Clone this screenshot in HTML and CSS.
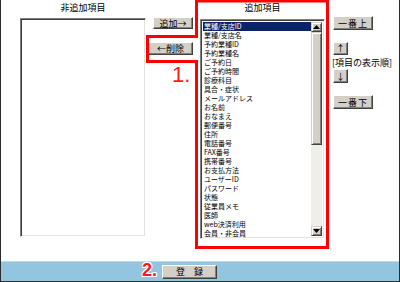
FILE: index.html
```html
<!DOCTYPE html>
<html lang="ja">
<head>
  <meta charset="UTF-8" />
  <title>表示項目の設定</title>
  <link rel="stylesheet" href="styles.css">
</head>
<body>

  <div class="page">
    <div class="main">
      <div class="col-left">
        <div class="title">非追加項目</div>
        <div class="listbox listbox-left"></div>
      </div>

      <div class="col-move">
        <button class="btn btn-add">追加→</button>
        <button class="btn btn-del">←削除</button>
        <div class="step step-1">1.</div>
      </div>

      <div class="col-right">
        <div class="title title-right">追加項目</div>
        <div class="listbox listbox-right">
          <ul class="items">
            <li class="selected">業種/支店ID</li>
            <li>業種/支店名</li>
            <li>予約業種ID</li>
            <li>予約業種名</li>
            <li>ご予約日</li>
            <li>ご予約時間</li>
            <li>診療科目</li>
            <li>具合・症状</li>
            <li>メールアドレス</li>
            <li>お名前</li>
            <li>おなまえ</li>
            <li>郵便番号</li>
            <li>住所</li>
            <li>電話番号</li>
            <li>FAX番号</li>
            <li>携帯番号</li>
            <li>お支払方法</li>
            <li>ユーザーID</li>
            <li>パスワード</li>
            <li>状態</li>
            <li>従業員メモ</li>
            <li>医師</li>
            <li>web決済利用</li>
            <li>会員・非会員</li>
          </ul>
          <div class="scrollbar">
            <div class="sb-btn">
              <svg width="7" height="4" viewBox="0 0 7 4"><path d="M3.5 0 L7 4 H0 Z" fill="#000"/></svg>
            </div>
            <div class="sb-thumb"></div>
            <div class="sb-track"></div>
            <div class="sb-btn">
              <svg width="7" height="4" viewBox="0 0 7 4"><path d="M0 0 H7 L3.5 4 Z" fill="#000"/></svg>
            </div>
          </div>
        </div>
      </div>

      <div class="col-order">
        <button class="btn btn-wide">一番上</button>
        <button class="btn btn-arrow btn-up">↑</button>
        <div class="order-label">[項目の表示順]</div>
        <button class="btn btn-arrow btn-down">↓</button>
        <button class="btn btn-wide btn-bottom">一番下</button>
      </div>

      <!-- annotation outline around the selected list -->
      <svg class="outline" width="400" height="261" viewBox="0 0 400 261">
        <path d="M196.5 1 H327.5 V247.5 H196.5 V61.5 H147.5 V36.5 H196.5 Z" fill="none" stroke="#ff0000" stroke-width="3"/>
      </svg>
    </div>

    <div class="footer">
      <span class="step step-2">2.</span>
      <button class="btn btn-submit">登　録</button>
    </div>
  </div>

</body>
</html>
```

FILE: styles.css
```css
body {
  margin: 0;
  background: #fff;
}
.page {
  position: relative;
  width: 398px;
  height: 281px;
  border: 1px solid #2b2b2b;
  border-top: 0;
  font-family: "Noto Sans CJK JP", sans-serif;
  color: #000;
  background: #fff;
}
.main {
  display: flex;
  height: 261px;
  padding-left: 19px;
}
.title {
  height: 18px;
  font-size: 9px;
  line-height: 15px;
  text-align: center;
}
.title-right {
  height: 19px;
}
.listbox {
  box-sizing: border-box;
  border: 1px solid;
  border-color: #808080 #fff #fff #808080;
  box-shadow: inset 1px 1px #404040, inset -1px -1px #e4e2dc;
  background: #fff;
}
.col-left {
  width: 126px;
}
.listbox-left {
  height: 219px;
}
.col-move {
  width: 54px;
  display: flex;
  flex-direction: column;
  align-items: flex-end;
  padding-top: 17px;
  padding-right: 7px;
  box-sizing: border-box;
}
.btn {
  box-sizing: border-box;
  margin: 0;
  padding: 0;
  font-family: "Noto Sans CJK JP", sans-serif;
  font-size: 9px;
  line-height: 1;
  color: #000;
  background: #d4d0c8;
  border: 1px solid;
  border-color: #fff #404040 #404040 #fff;
  box-shadow: inset -1px -1px #808080;
}
.btn-add {
  width: 40px;
  height: 12px;
}
.btn-del {
  width: 45px;
  height: 13px;
  margin-top: 13px;
}
.step {
  font-family: "Liberation Sans", sans-serif;
  color: #ff1a1a;
}
.step-1 {
  align-self: flex-start;
  margin: 9px 0 0 26px;
  font-size: 22px;
  line-height: 22px;
}
.col-right {
  width: 125px;
}
.listbox-right {
  display: flex;
  height: 220px;
  padding: 2px;
}
.items {
  list-style: none;
  margin: 0;
  padding: 0;
  width: 110px;
  font-size: 7px;
  line-height: 9px;
  white-space: nowrap;
}
.items li {
  height: 9px;
  padding-left: 1px;
}
.items .selected {
  background: #0a246a;
  color: #fff;
}
.scrollbar {
  width: 11px;
  display: flex;
  flex-direction: column;
}
.sb-btn, .sb-thumb {
  box-sizing: border-box;
  background: #d4d0c8;
  border: 1px solid;
  border-color: #d4d0c8 #404040 #404040 #d4d0c8;
  box-shadow: inset 1px 1px #fff, inset -1px -1px #808080;
}
.sb-btn {
  height: 10px;
  display: flex;
  align-items: center;
  justify-content: center;
}
.sb-thumb {
  height: 113px;
}
.sb-track {
  flex: 1;
  background: #efeee9;
}
.col-order {
  display: flex;
  flex-direction: column;
  align-items: flex-start;
  margin-left: 8px;
  padding-top: 16px;
}
.btn-wide {
  width: 40px;
  height: 14px;
  letter-spacing: 1px;
}
.btn-arrow {
  width: 15px;
  height: 13px;
}
.btn-up {
  margin-top: 12px;
}
.order-label {
  font-size: 9px;
  line-height: 11px;
  margin: 2px 0 1px -1px;
  white-space: nowrap;
}
.btn-down {
  height: 14px;
}
.btn-bottom {
  margin-top: 12px;
}
.outline {
  position: absolute;
  top: 0;
  left: -1px;
}
.footer {
  display: flex;
  align-items: center;
  height: 19px;
  padding-left: 141px;
  border-top: 1px solid #bcdcee;
  background: #93c4e0;
}
.step-2 {
  font-size: 18px;
  font-weight: bold;
  line-height: 18px;
  margin-top: -3px;
  text-shadow: 1px 0 #fff, -1px 0 #fff, 0 1px #fff, 0 -1px #fff, 1px 1px #fff, -1px -1px #fff, 1px -1px #fff, -1px 1px #fff;
}
.btn-submit {
  width: 55px;
  height: 14px;
  margin-left: 5px;
}
```
